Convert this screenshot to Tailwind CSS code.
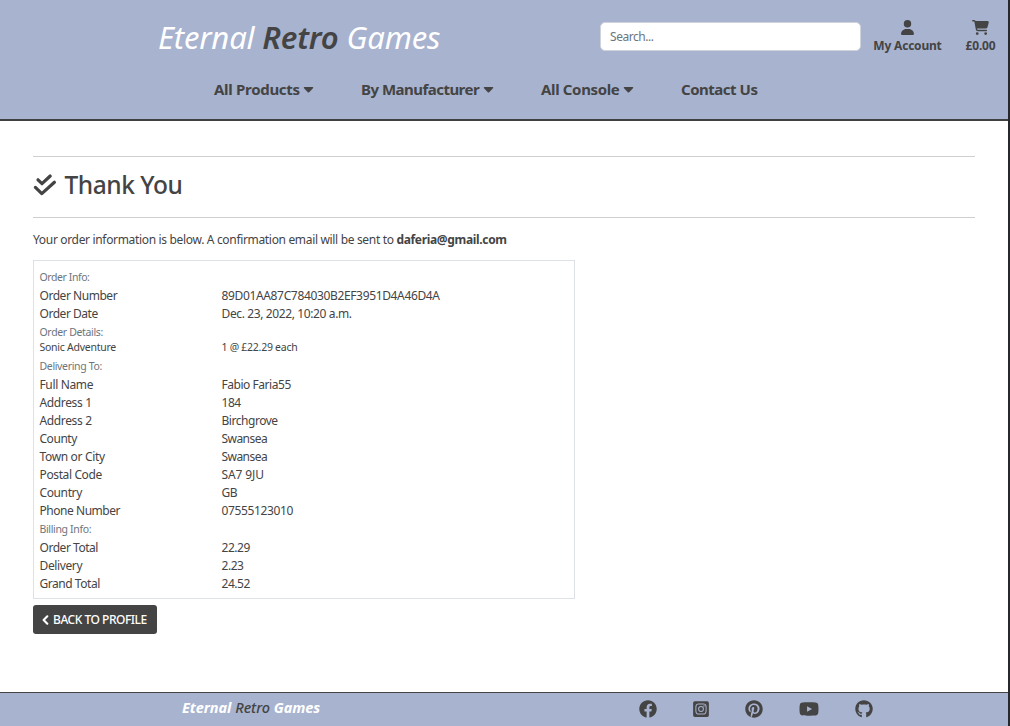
<!DOCTYPE html>
<html lang="en">
<head>
<meta charset="utf-8">
<title>Eternal Retro Games</title>
<script src="https://cdn.jsdelivr.net/npm/@tailwindcss/browser@4"></script>
</head>
<body class="w-[1010px] h-[726px] overflow-hidden bg-white text-[#444] border-r-2 border-[#26282b] font-['Noto_Sans','Open_Sans',sans-serif] flex flex-col whitespace-nowrap">
<header class="h-[121px] shrink-0 bg-[#a8b3cf] border-b-2 border-[#3f4042]">
  <div class="h-[74px] flex">
    <h1 class="w-[600px] pl-[158px] text-[31px] leading-[74px] italic font-normal text-white tracking-[-0.17px]"><span>Eternal</span> <span class="font-semibold text-[#444]">Retro</span> <span>Games</span></h1>
    <div class="mt-[22px] w-[261px] h-[29px] rounded-[5px] border border-[#ced4da] bg-white px-[9px] text-[12px] leading-[27px] text-[#6c757d] tracking-[-0.45px]">Search...</div>
    <a class="ml-[12px] mt-[20px] w-[69px] flex flex-col items-center">
      <svg class="h-[15px] w-[13px]" viewBox="0 0 448 512" fill="#444"><path d="M224 256A128 128 0 1 0 224 0a128 128 0 1 0 0 256zm-45.7 48C79.8 304 0 383.8 0 482.3C0 498.7 13.3 512 29.7 512H418.3c16.4 0 29.7-13.3 29.7-29.7C448 383.8 368.2 304 269.7 304H178.3z"/></svg>
      <span class="mt-px text-[12px] leading-[20px] font-bold tracking-[-0.2px]">My Account</span>
    </a>
    <a class="ml-[22px] mt-[20px] w-[33px] flex flex-col items-center">
      <svg class="h-[15px] w-[17px]" viewBox="0 0 576 512" fill="#444"><path d="M0 24C0 10.7 10.7 0 24 0H69.5c22 0 41.5 12.8 50.6 32h411c26.3 0 45.5 25 38.6 50.4l-41 152.3c-8.5 31.4-37 53.3-69.5 53.3H170.7l5.4 28.5c2.2 11.3 12.1 19.5 23.6 19.5H488c13.3 0 24 10.7 24 24s-10.7 24-24 24H199.7c-34.6 0-64.3-24.6-70.7-58.5L77.4 54.5c-.7-3.8-4-6.5-7.9-6.5H24C10.7 48 0 37.3 0 24zM128 464a48 48 0 1 1 96 0 48 48 0 1 1 -96 0zm336-48a48 48 0 1 1 0 96 48 48 0 1 1 0-96z"/></svg>
      <span class="mt-px text-[12px] leading-[20px] font-bold tracking-[-0.2px]">£0.00</span>
    </a>
  </div>
  <nav class="pl-[214px] flex text-[15px] leading-[31px] font-bold tracking-[-0.48px]">
    <a class="w-[147px] flex items-center"><span class="w-[89px] tracking-[-0.3px]">All Products</span><svg class="mt-px w-[11px] h-[6px]" viewBox="0 0 10 6" fill="#444"><path d="M1 0h8q1 0 .7 1L5.7 5.2q-.7.6-1.4 0L.3 1Q0 0 1 0z"/></svg></a>
    <a class="w-[180px] flex items-center"><span class="w-[122px] tracking-[-0.52px]">By Manufacturer</span><svg class="mt-px w-[11px] h-[6px]" viewBox="0 0 10 6" fill="#444"><path d="M1 0h8q1 0 .7 1L5.7 5.2q-.7.6-1.4 0L.3 1Q0 0 1 0z"/></svg></a>
    <a class="w-[140px] flex items-center"><span class="w-[82px] tracking-[-0.35px]">All Console</span><svg class="mt-px w-[11px] h-[6px]" viewBox="0 0 10 6" fill="#444"><path d="M1 0h8q1 0 .7 1L5.7 5.2q-.7.6-1.4 0L.3 1Q0 0 1 0z"/></svg></a>
    <a>Contact Us</a>
  </nav>
</header>
<main class="h-[571px] shrink-0 px-[33px] pt-[35px] text-[12px]">
  <div class="w-[942px] h-[62px] border-y border-[#cfcfcf] flex items-center pb-[5px]">
    <svg class="w-[24px] h-[24px]" viewBox="0 0 24 24" fill="none" stroke="#444" stroke-width="3.2" stroke-linecap="round" stroke-linejoin="round"><path d="M5 6.8l4 3.9L17.2 3M2.4 14.4l6.4 6.2L21.4 9.2"/></svg>
    <h2 class="ml-[7.5px] pt-px text-[24.5px] leading-[40px] font-medium tracking-[-0.45px]">Thank You</h2>
  </div>
  <p class="h-[42px] leading-[43px] tracking-[-0.33px]">Your order information is below. A confirmation email will be sent to <b>daferia@gmail.com</b></p>
  <section class="w-[542px] h-[339px] border border-[#dee2e6] pl-[5.5px] pt-[7px] leading-[18px] tracking-[-0.46px]">
    <div class="h-[19px] text-[10.5px] text-[#6c757d] tracking-[-0.42px]">Order Info:</div>
    <div class="grid grid-cols-[182px_1fr]">
      <span>Order Number</span><span class="tracking-[-0.35px]">89D01AA87C784030B2EF3951D4A46D4A</span>
      <span>Order Date</span><span class="tracking-[-0.38px]">Dec. 23, 2022, 10:20 a.m.</span>
    </div>
    <div class="h-[15px] text-[10.5px] text-[#6c757d] tracking-[-0.35px]">Order Details:</div>
    <div class="h-[19px] grid grid-cols-[182px_1fr] text-[10.5px] tracking-[-0.26px]"><span>Sonic Adventure</span><span>1 @ £22.29 each</span></div>
    <div class="h-[19px] text-[10.5px] text-[#6c757d] tracking-[-0.35px]">Delivering To:</div>
    <div class="grid grid-cols-[182px_1fr]">
      <span class="tracking-[-0.36px]">Full Name</span><span>Fabio Faria55</span>
      <span class="tracking-[-0.36px]">Address 1</span><span>184</span>
      <span class="tracking-[-0.36px]">Address 2</span><span>Birchgrove</span>
      <span>County</span><span class="tracking-[-0.55px]">Swansea</span>
      <span class="tracking-[-0.34px]">Town or City</span><span class="tracking-[-0.55px]">Swansea</span>
      <span class="tracking-[-0.38px]">Postal Code</span><span class="tracking-[-0.1px]">SA7 9JU</span>
      <span class="tracking-[-0.38px]">Country</span><span>GB</span>
      <span>Phone Number</span><span class="tracking-[-0.37px]">07555123010</span>
    </div>
    <div class="h-[19px] text-[10.5px] text-[#6c757d] tracking-[-0.35px]">Billing Info:</div>
    <div class="grid grid-cols-[182px_1fr]">
      <span>Order Total</span><span>22.29</span>
      <span class="tracking-[-0.38px]">Delivery</span><span>2.23</span>
      <span>Grand Total</span><span>24.52</span>
    </div>
  </section>
  <a class="mt-[6px] w-[124px] h-[29px] rounded-[3px] bg-[#444] text-white flex items-center pl-[9px]">
    <svg class="w-[7px] h-[10px]" viewBox="0 0 7 10" fill="none" stroke="#fff" stroke-width="2.1" stroke-linecap="round" stroke-linejoin="round"><path d="M5.3 1.3L1.6 5l3.7 3.7"/></svg>
    <span class="ml-[4px] font-medium tracking-[-0.47px]">BACK TO PROFILE</span>
  </a>
</main>
<footer class="h-[34px] shrink-0 bg-[#a8b3cf] border-t border-[#444] pl-[182px] flex">
  <div class="w-[457px] text-[14.5px] leading-[28px] italic font-bold text-white tracking-[-0.04px]">Eternal <span class="font-medium text-[#444]">Retro</span> Games</div>
  <div class="w-[234px] h-[32px] flex items-center justify-between">
    <svg class="w-[18px] h-[18px]" viewBox="0 0 512 512" fill="#444"><path d="M504 256C504 119 393 8 256 8S8 119 8 256c0 123.78 90.69 226.38 209.25 245V327.69h-63V256h63v-54.64c0-62.15 37-96.48 93.67-96.48 27.14 0 55.52 4.84 55.52 4.84v61h-31.28c-30.8 0-40.41 19.12-40.41 38.73V256h68.78l-11 71.69h-57.78V501C413.31 482.38 504 379.78 504 256z"/></svg>
    <svg class="w-[16px] h-[18px]" viewBox="0 0 448 512" fill="#444"><path d="M224 202.66A53.34 53.34 0 1 0 277.36 256 53.38 53.38 0 0 0 224 202.66zm124.71-41a54 54 0 0 0-30.41-30.41c-21-8.29-71-6.43-94.3-6.43s-73.25-1.93-94.31 6.43a54 54 0 0 0-30.41 30.41c-8.28 21-6.43 71.05-6.43 94.33s-1.85 73.27 6.47 94.34a54 54 0 0 0 30.41 30.41c21 8.29 71 6.43 94.31 6.43s73.24 1.93 94.3-6.43a54 54 0 0 0 30.41-30.41c8.35-21 6.43-71.05 6.43-94.33s1.92-73.26-6.43-94.33zM224 338a82 82 0 1 1 82-82 81.9 81.9 0 0 1-82 82zm85.38-148.3a19.14 19.14 0 1 1 19.13-19.14 19.1 19.1 0 0 1-19.09 19.18zM400 32H48A48 48 0 0 0 0 80v352a48 48 0 0 0 48 48h352a48 48 0 0 0 48-48V80a48 48 0 0 0-48-48zm-17.12 290c-1.29 25.63-7.14 48.34-25.85 67s-41.4 24.63-67 25.85c-26.41 1.49-105.59 1.49-132 0-25.63-1.29-48.26-7.15-67-25.85s-24.63-41.42-25.85-67c-1.49-26.42-1.49-105.61 0-132 1.29-25.63 7.07-48.34 25.85-67s41.47-24.56 67-25.78c26.41-1.49 105.59-1.49 132 0 25.63 1.29 48.33 7.15 67 25.85s24.63 41.42 25.85 67.05c1.49 26.32 1.49 105.44 0 131.88z"/></svg>
    <svg class="w-[18px] h-[18px]" viewBox="0 0 496 512" fill="#444"><path d="M496 256c0 137-111 248-248 248-25.6 0-50.2-3.9-73.4-11.1 10.1-16.5 25.2-43.5 30.8-65 3-11.6 15.4-59 15.4-59 8.1 15.4 31.7 28.5 56.8 28.5 74.8 0 128.7-68.8 128.7-154.3 0-81.9-66.9-143.2-152.9-143.2-107 0-163.9 71.8-163.9 150.1 0 36.4 19.4 81.7 50.3 96.1 4.7 2.2 7.2 1.2 8.3-3.3.8-3.4 5-20.3 6.9-28.1.6-2.5.3-4.7-1.7-7.1-10.1-12.5-18.3-35.3-18.3-56.6 0-54.7 41.4-107.6 112-107.6 60.9 0 103.6 41.5 103.6 100.9 0 67.1-33.9 113.6-78 113.6-24.3 0-42.6-20.1-36.7-44.8 7-29.5 20.5-61.3 20.5-82.6 0-19-10.2-34.9-31.4-34.9-24.9 0-44.9 25.7-44.9 60.2 0 22 7.4 36.8 7.4 36.8s-24.5 103.8-29 123.2c-5 21.4-3 51.6-.9 71.2C65.4 450.9 0 361.1 0 256 0 119 111 8 248 8s248 111 248 248z"/></svg>
    <svg class="w-[20px] h-[18px]" viewBox="0 0 576 512" fill="#444"><path d="M549.655 124.083c-6.281-23.65-24.787-42.276-48.284-48.597C458.781 64 288 64 288 64S117.22 64 74.629 75.486c-23.497 6.322-42.003 24.947-48.284 48.597-11.412 42.867-11.412 132.305-11.412 132.305s0 89.438 11.412 132.305c6.281 23.65 24.787 41.5 48.284 47.821C117.22 448 288 448 288 448s170.78 0 213.371-11.486c23.497-6.321 42.003-24.171 48.284-47.821 11.412-42.867 11.412-132.305 11.412-132.305s0-89.438-11.412-132.305zm-317.51 213.508V175.185l142.739 81.205-142.739 81.201z"/></svg>
    <svg class="w-[18px] h-[18px]" viewBox="0 0 496 512" fill="#444"><path d="M244.8 8C106.1 8 0 113.3 0 252c0 110.9 69.8 205.8 169.5 239.2 12.8 2.3 17.3-5.6 17.3-12.1 0-6.2-.3-40.4-.3-61.4 0 0-70 15-84.7-29.8 0 0-11.4-29.1-27.8-36.6 0 0-22.9-15.7 1.6-15.4 0 0 24.9 2 38.6 25.8 21.9 38.6 58.6 27.5 72.9 20.9 2.3-16 8.8-27.1 16-33.7-55.9-6.2-112.3-14.3-112.3-110.5 0-27.5 7.6-41.3 23.6-58.9-2.6-6.5-11.1-33.3 2.6-67.9 20.9-6.5 69 27 69 27 20-5.6 41.5-8.5 62.8-8.5s42.8 2.9 62.8 8.5c0 0 48.1-33.6 69-27 13.7 34.7 5.2 61.4 2.6 67.9 16 17.7 25.8 31.5 25.8 58.9 0 96.5-58.9 104.2-114.8 110.5 9.2 7.9 17 22.9 17 46.4 0 33.7-.3 75.4-.3 83.6 0 6.5 4.6 14.4 17.3 12.1C428.2 457.8 496 362.9 496 252 496 113.3 383.5 8 244.8 8z"/></svg>
  </div>
</footer>
</body>
</html>
